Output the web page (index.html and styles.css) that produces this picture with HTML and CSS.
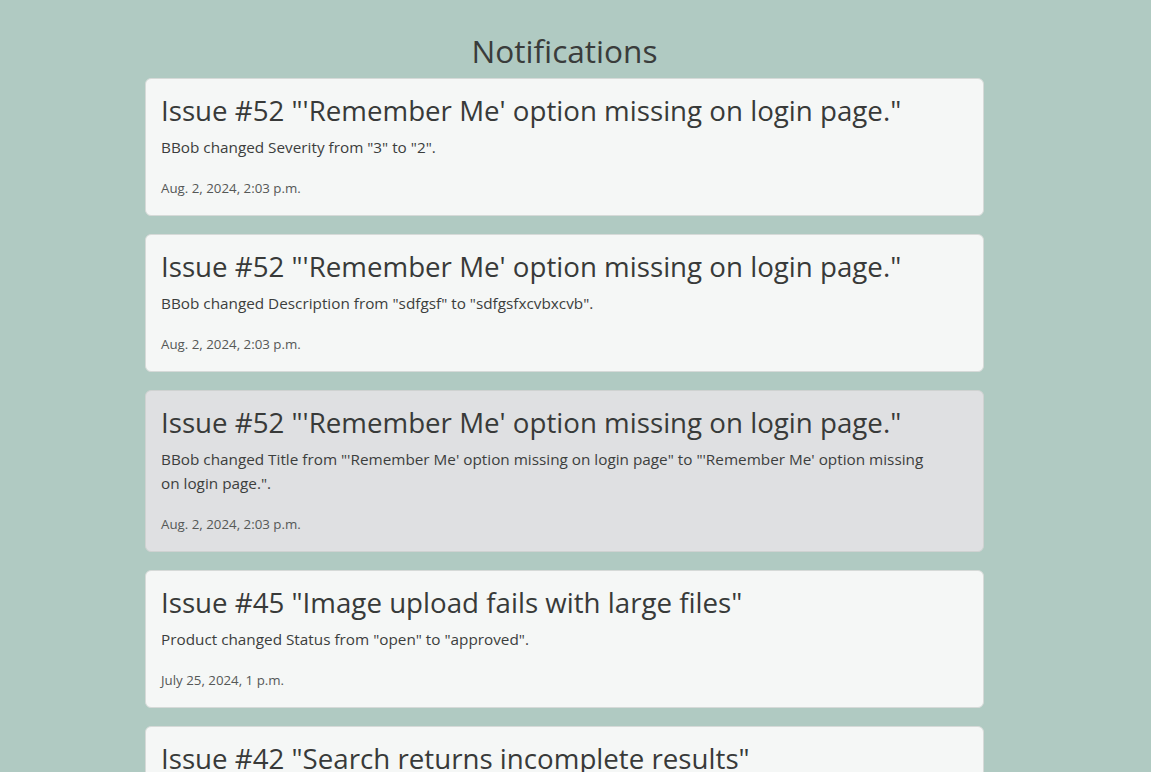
FILE: index.html
```html
<!DOCTYPE html>
<html lang="en">
<head>
<meta charset="utf-8">
<title>Notifications</title>
<link rel="stylesheet" href="styles.css">
</head>
<body>
<main class="page">
  <h1 class="page-title">Notifications</h1>
  <div class="list">
    <div class="card">
      <h2 class="card-title">Issue #52 "'Remember Me' option missing on login page."</h2>
      <p class="card-text">BBob changed Severity from "3" to "2".</p>
      <p class="card-date">Aug. 2, 2024, 2:03 p.m.</p>
    </div>
    <div class="card">
      <h2 class="card-title">Issue #52 "'Remember Me' option missing on login page."</h2>
      <p class="card-text">BBob changed Description from "sdfgsf" to "sdfgsfxcvbxcvb".</p>
      <p class="card-date">Aug. 2, 2024, 2:03 p.m.</p>
    </div>
    <div class="card card-active">
      <h2 class="card-title">Issue #52 "'Remember Me' option missing on login page."</h2>
      <p class="card-text">BBob changed Title from "'Remember Me' option missing on login page" to "'Remember Me' option missing on login page.".</p>
      <p class="card-date">Aug. 2, 2024, 2:03 p.m.</p>
    </div>
    <div class="card">
      <h2 class="card-title">Issue #45 "Image upload fails with large files"</h2>
      <p class="card-text">Product changed Status from "open" to "approved".</p>
      <p class="card-date">July 25, 2024, 1 p.m.</p>
    </div>
    <div class="card">
      <h2 class="card-title">Issue #42 "Search returns incomplete results"</h2>
      <p class="card-text">Product changed Status from "open" to "approved".</p>
      <p class="card-date">July 20, 2024, 1 p.m.</p>
    </div>
  </div>
</main>
</body>
</html>
```
FILE: styles.css
```css
html, body {
  margin: 0;
  padding: 0;
}
body {
  background: #b0cac2;
  color: #393b3a;
  font-family: "Open Sans", "Liberation Sans", sans-serif;
  overflow: hidden;
}
.page {
  width: 839px;
  margin: 0 auto;
  padding: 0 22px 0 0;
  display: flex;
  flex-direction: column;
  align-items: stretch;
  box-sizing: content-box;
}
.page-title {
  margin: 0 0 6px;
  padding-top: 30px;
  height: 42px;
  line-height: 42px;
  text-align: center;
  font-size: 31.6px;
  font-weight: 500;
  color: #3a3c3b;
  box-sizing: content-box;
}
.list {
  display: flex;
  flex-direction: column;
  gap: 18px;
}
.card {
  background: #f5f7f6;
  border: 1px solid #d6dad8;
  border-radius: 6px;
  padding: 12px 16px 16px 15px;
}
.card-active {
  background: #dfe0e2;
  border-color: #cfd2d1;
}
.card-title {
  margin: 0;
  font-size: 27.7px;
  line-height: 38px;
  font-weight: 500;
  color: #383a39;
}
.card-text {
  margin: 6px 0 0;
  max-width: 780px;
  font-size: 15.3px;
  line-height: 24px;
  color: #3c3e3d;
}
.card-date {
  margin: 19px 0 0;
  font-size: 13.3px;
  line-height: 21px;
  color: #555857;
}
```
